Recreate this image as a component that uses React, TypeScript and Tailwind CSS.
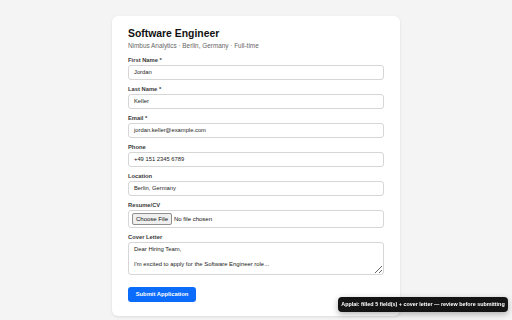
import React from "react";

const fields = [
  { label: "First Name *", value: "Jordan" },
  { label: "Last Name *", value: "Keller" },
  { label: "Email *", value: "jordan.keller@example.com" },
  { label: "Phone", value: "+49 151 2345 6789" },
  { label: "Location", value: "Berlin, Germany" },
];

export default function App() {
  return (
    <div
      className="min-h-screen w-full bg-[#f4f4f4] pt-[16px]"
      style={{ fontFamily: '"Liberation Sans", Arial, sans-serif' }}
    >
      <div className="mx-auto w-[288px] rounded-[6px] bg-white px-[16px] pt-[12px] pb-[13px] shadow-[0_1px_3px_rgba(0,0,0,0.1)]">
        <h1 className="text-[10.4px] leading-[12px] font-bold text-[#111]">Software Engineer</h1>
        <p className="mt-[2px] text-[6.4px] leading-[8px] text-[#666]">
          Nimbus Analytics · Berlin, Germany · Full-time
        </p>
        <div className="mt-[6px] flex flex-col gap-[5px]">
          {fields.map((f) => (
            <div key={f.label} className="flex flex-col gap-[1px]">
              <label className="text-[5.8px] leading-[8px] font-bold text-[#3a3a3a]">{f.label}</label>
              <div className="flex h-[15px] items-center rounded-[3px] border border-[#d6d6d6] px-[5px] text-[5.8px] text-[#222]">
                {f.value}
              </div>
            </div>
          ))}
          <div className="flex flex-col gap-[1px]">
            <label className="text-[5.8px] leading-[8px] font-bold text-[#3a3a3a]">Resume/CV</label>
            <div className="flex h-[18px] items-center gap-[2px] rounded-[3px] border border-[#d6d6d6] px-[3px] text-[6px] text-[#111]">
              <span className="flex h-[12px] items-center rounded-[2px] border border-[#8f8f8f] bg-[#efefef] px-[3px]">
                Choose File
              </span>
              <span>No file chosen</span>
            </div>
          </div>
          <div className="flex flex-col gap-[1px]">
            <label className="text-[5.8px] leading-[8px] font-bold text-[#3a3a3a]">Cover Letter</label>
            <textarea
              className="h-[33px] w-full resize-y rounded-[3px] border border-[#d6d6d6] px-[5px] py-[3px] text-[5.9px] leading-[7.5px] text-[#222] outline-none"
              style={{ fontFamily: '"Liberation Sans", Arial, sans-serif' }}
              defaultValue={"Dear Hiring Team,\n\nI'm excited to apply for the Software Engineer role..."}
            />
          </div>
        </div>
        <button className="mt-[12px] h-[15px] w-[68px] rounded-[3px] bg-[#0b6cfb] text-[5.8px] font-bold text-white">
          Submit Application
        </button>
      </div>
      <div className="fixed right-[4px] bottom-[8px] flex h-[15px] w-[170px] items-center justify-center whitespace-nowrap rounded-[4px] bg-[#141414] text-[5.4px] font-bold text-white shadow-[0_2px_6px_rgba(0,0,0,0.3)]">
        Applai: filled 5 field(s) + cover letter — review before submitting
      </div>
    </div>
  );
}
